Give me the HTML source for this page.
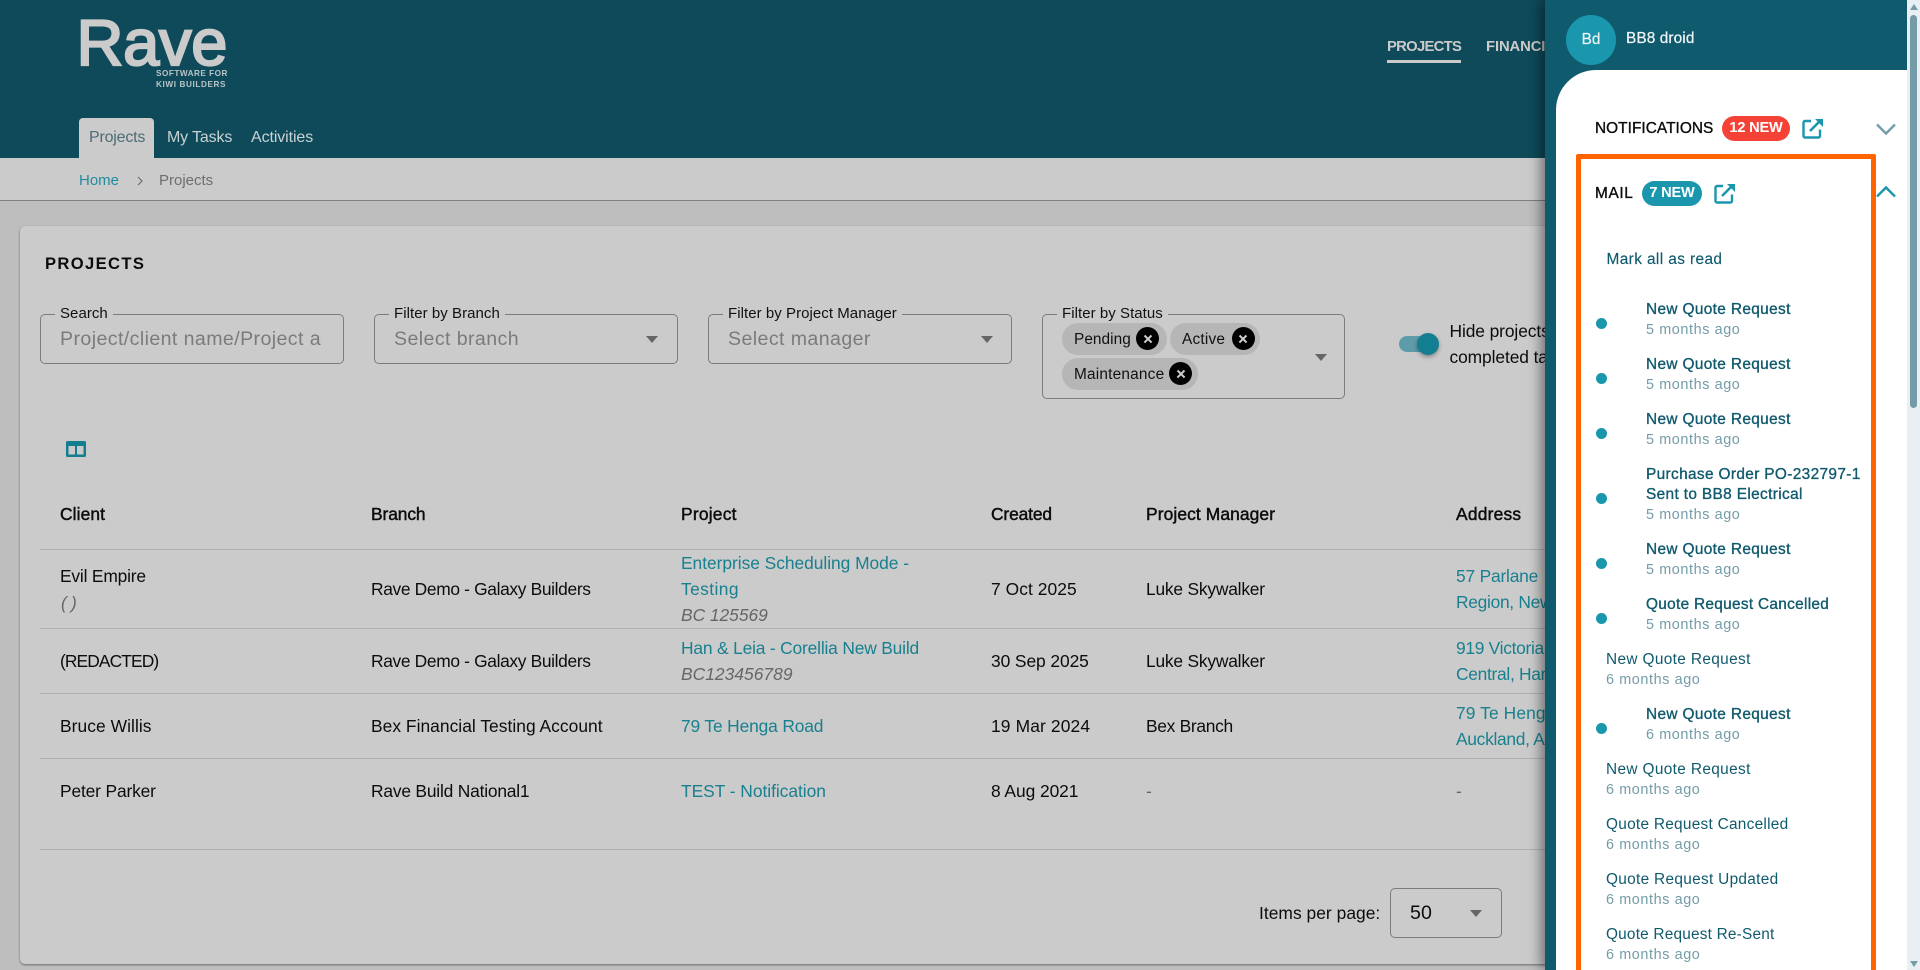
<!DOCTYPE html>
<html lang="en"><head><meta charset="utf-8"><title>Rave Projects</title>
<style>
html,body{margin:0;padding:0;width:1920px;height:970px;overflow:hidden;background:#bebebe}
body{font-family:"Liberation Sans",sans-serif;color:#0c0c0c;position:relative}
div,span,a{position:absolute;display:block}
.t{white-space:nowrap;line-height:20px}
.b{font-size:17.4px;letter-spacing:-.3px;margin-top:.5px}
.h{font-size:17.4px;letter-spacing:-.3px;-webkit-text-stroke:.45px currentColor;margin-top:.5px}
.l{font-size:17.4px;letter-spacing:-.3px;color:#19808f;margin-top:.5px}
.i{font-size:17.4px;letter-spacing:-.3px;color:#666;font-style:italic;margin-top:.5px}
.hr{left:40px;width:1505px;height:1px;background:#b0b0b0}
.f{border:1.4px solid #7c7c7c;border-radius:5px;box-sizing:border-box}
.lb{font-size:15px;letter-spacing:.05px;background:#cbcbcb;padding:0 5px;color:#111;margin-top:1px;line-height:18px}
.ph{font-size:19.6px;color:#7b7b7b;letter-spacing:.4px}
.ar{width:0;height:0;border-left:6.5px solid transparent;border-right:6.5px solid transparent;border-top:7px solid #666}
.chip{background:#b6b6b6;border-radius:16px;height:32px}
.x{width:23px;height:23px;border-radius:50%;background:#000}
.x:before,.x:after{content:"";position:absolute;left:6.5px;top:10.5px;width:10px;height:2.2px;background:#ccc;transform:rotate(45deg)}
.x:after{transform:rotate(-45deg)}
.ct{font-size:15.4px;letter-spacing:.2px;color:#111;margin-top:1px}
.n{font-size:15.4px;letter-spacing:.36px;color:#105a6d;margin-top:2px}
.n.m{-webkit-text-stroke:.35px #105a6d}
.s{font-size:14.4px;letter-spacing:.6px;color:#749ca8;margin-top:1px}
.d{left:1595.5px;width:11px;height:11px;border-radius:50%;background:#1a97ad}
</style></head><body>

<!-- header -->
<div style="left:0;top:0;width:1920px;height:158px;background:#0e4a59"></div>
<div class="t" style="left:76.500px;top:6px;font-size:65px;line-height:74px;letter-spacing:-.3px;color:#cbcbcb;-webkit-text-stroke:2.2px #cbcbcb">Rave</div>
<div class="t" style="left:156px;top:69px;font-size:8.2px;line-height:10px;font-weight:bold;letter-spacing:.5px;color:#b9c4c7">SOFTWARE FOR</div>
<div class="t" style="left:156px;top:79.5px;font-size:8.2px;line-height:10px;font-weight:bold;letter-spacing:.6px;color:#b9c4c7">KIWI BUILDERS</div>
<div style="left:79px;top:118px;width:75px;height:40px;background:#cbcbcb;border-radius:4px 4px 0 0"></div>
<div class="t" style="left:89px;top:128px;font-size:16px;letter-spacing:-.2px;color:#4c6c75">Projects</div>
<div class="t" style="left:167px;top:128px;font-size:16px;letter-spacing:-.15px;color:#c9d2d4">My Tasks</div>
<div class="t" style="left:251px;top:128px;font-size:16px;letter-spacing:-.1px;color:#c9d2d4">Activities</div>
<div class="t" style="left:1387px;top:37px;font-size:14.8px;font-weight:bold;letter-spacing:-.7px;color:#cbcbcb">PROJECTS</div>
<div style="left:1387px;top:60px;width:74px;height:3px;background:#cbcbcb"></div>
<div class="t" style="left:1486px;top:37px;font-size:14.8px;font-weight:bold;letter-spacing:-.1px;color:#cbcbcb">FINANCIALS</div>

<!-- breadcrumb -->
<div style="left:0;top:158px;width:1920px;height:42px;background:#cbcbcb;border-bottom:1px solid #7f7f7f"></div>
<div class="t" style="left:79px;top:171px;font-size:15px;letter-spacing:0;color:#208ca0">Home</div>
<svg style="position:absolute;left:136px;top:175px" width="8" height="12"><path d="M2 2l4 4-4 4" fill="none" stroke="#6e6e6e" stroke-width="1.2"/></svg>
<div class="t" style="left:159px;top:171px;font-size:15px;letter-spacing:0;color:#6e6e6e">Projects</div>

<!-- card -->
<div style="left:20px;top:226px;width:1600px;height:738px;background:#cbcbcb;border-radius:5px;box-shadow:0 1px 2px rgba(0,0,0,.45)"></div>
<div class="t" style="left:45px;top:254px;font-size:16.6px;font-weight:bold;letter-spacing:1.35px;color:#0c0c0c">PROJECTS</div>

<!-- filters -->
<div class="f" style="left:40px;top:314px;width:304px;height:50px"></div>
<div class="t lb" style="left:55px;top:304px">Search</div>
<div style="left:60px;top:325px;width:262px;height:30px;overflow:hidden"><span class="t ph" style="left:0;top:4px">Project/client name/Project address</span></div>
<div class="f" style="left:374px;top:314px;width:304px;height:50px"></div>
<div class="t lb" style="left:389px;top:304px">Filter by Branch</div>
<div class="t ph" style="left:394px;top:329px">Select branch</div>
<div class="ar" style="left:646px;top:336px"></div>
<div class="f" style="left:708px;top:314px;width:304px;height:50px"></div>
<div class="t lb" style="left:723px;top:304px">Filter by Project Manager</div>
<div class="t ph" style="left:728px;top:329px">Select manager</div>
<div class="ar" style="left:980.5px;top:336px"></div>
<div class="f" style="left:1042px;top:314px;width:303px;height:85px"></div>
<div class="t lb" style="left:1057px;top:304px">Filter by Status</div>
<div class="chip" style="left:1062px;top:323px;width:105px"></div>
<div class="t ct" style="left:1074px;top:329px;letter-spacing:.05px">Pending</div>
<div class="x" style="left:1136px;top:327px"></div>
<div class="chip" style="left:1170px;top:323px;width:90px"></div>
<div class="t ct" style="left:1182px;top:329px">Active</div>
<div class="x" style="left:1231.5px;top:327px"></div>
<div class="chip" style="left:1062px;top:358px;width:136px"></div>
<div class="t ct" style="left:1074px;top:364px">Maintenance</div>
<div class="x" style="left:1169px;top:362px"></div>
<div class="ar" style="left:1314.5px;top:354px"></div>
<div style="left:1399px;top:336px;width:36px;height:16px;border-radius:8px;background:#5f9ca9"></div>
<div style="left:1416.5px;top:333px;width:22px;height:22px;border-radius:50%;background:#137e90;box-shadow:0 2px 4px rgba(0,0,0,.35)"></div>
<div class="t b" style="left:1449.5px;top:321px;margin-top:0;letter-spacing:-.1px">Hide projects with</div>
<div class="t b" style="left:1449.5px;top:347px;margin-top:0;letter-spacing:-.1px">completed tasks</div>

<!-- column icon -->
<svg style="position:absolute;left:66px;top:441px" width="20" height="16" viewBox="0 0 20 16"><path d="M1.500 0h17A1.500 1.500 0 0 1 20 1.500v13a1.500 1.500 0 0 1-1.500 1.500h-17A1.500 1.500 0 0 1 0 14.500v-13A1.500 1.500 0 0 1 1.500 0zM2.500 5v8.500h6.500V5zM11 5v8.500h6.500V5z" fill="#137e90" fill-rule="evenodd"/></svg>

<!-- table -->
<div class="t h" style="left:60px;top:503px;letter-spacing:.1px">Client</div>
<div class="t h" style="left:371px;top:503px;letter-spacing:-.1px">Branch</div>
<div class="t h" style="left:681px;top:503px;letter-spacing:.22px">Project</div>
<div class="t h" style="left:991px;top:503px;letter-spacing:-.13px">Created</div>
<div class="t h" style="left:1146px;top:503px;letter-spacing:.1px">Project Manager</div>
<div class="t h" style="left:1456px;top:503px;letter-spacing:.22px">Address</div>
<div class="hr" style="top:549px"></div>

<div class="t b" style="left:60px;top:565px;letter-spacing:-.19px">Evil Empire</div>
<div class="t i" style="left:61px;top:592px">( )</div>
<div class="t b" style="left:371px;top:578px;letter-spacing:-.35px">Rave Demo - Galaxy Builders</div>
<div class="t l" style="left:681px;top:552px;letter-spacing:-.04px">Enterprise Scheduling Mode -</div>
<div class="t l" style="left:681px;top:578px;letter-spacing:.4px">Testing</div>
<div class="t i" style="left:681px;top:604px;letter-spacing:-.03px">BC 125569</div>
<div class="t b" style="left:991px;top:578px;letter-spacing:.07px">7 Oct 2025</div>
<div class="t b" style="left:1146px;top:578px;letter-spacing:-.21px">Luke Skywalker</div>
<div class="t l" style="left:1456px;top:565px;letter-spacing:-.2px">57 Parlane</div>
<div class="t l" style="left:1456px;top:591px">Region, New Zealand</div>
<div class="hr" style="top:628px"></div>

<div class="t b" style="left:60px;top:650px;letter-spacing:-.9px">(REDACTED)</div>
<div class="t b" style="left:371px;top:650px;letter-spacing:-.35px">Rave Demo - Galaxy Builders</div>
<div class="t l" style="left:681px;top:637px;letter-spacing:-.18px">Han &amp; Leia - Corellia New Build</div>
<div class="t i" style="left:681px;top:663px;letter-spacing:.03px">BC123456789</div>
<div class="t b" style="left:991px;top:650px;letter-spacing:-.08px">30 Sep 2025</div>
<div class="t b" style="left:1146px;top:650px;letter-spacing:-.21px">Luke Skywalker</div>
<div class="t l" style="left:1456px;top:637px">919 Victoria Street</div>
<div class="t l" style="left:1456px;top:663px">Central, Hamilton</div>
<div class="hr" style="top:693px"></div>

<div class="t b" style="left:60px;top:715px;letter-spacing:.06px">Bruce Willis</div>
<div class="t b" style="left:371px;top:715px;letter-spacing:.03px">Bex Financial Testing Account</div>
<div class="t l" style="left:681px;top:715px;letter-spacing:-.15px">79 Te Henga Road</div>
<div class="t b" style="left:991px;top:715px;letter-spacing:.14px">19 Mar 2024</div>
<div class="t b" style="left:1146px;top:715px">Bex Branch</div>
<div class="t l" style="left:1456px;top:702px;letter-spacing:.1px">79 Te Henga Road</div>
<div class="t l" style="left:1456px;top:728px">Auckland, Auckland</div>
<div class="hr" style="top:758px"></div>

<div class="t b" style="left:60px;top:780px;letter-spacing:-.15px">Peter Parker</div>
<div class="t b" style="left:371px;top:780px;letter-spacing:-.2px">Rave Build National1</div>
<div class="t l" style="left:681px;top:780px;letter-spacing:-.04px">TEST - Notification</div>
<div class="t b" style="left:991px;top:780px;letter-spacing:-.06px">8 Aug 2021</div>
<div class="t b" style="left:1146px;top:780px;color:#666">-</div>
<div class="t b" style="left:1456px;top:780px;color:#666">-</div>
<div class="hr" style="top:849px"></div>

<div class="t b" style="left:1259px;top:903px;margin-top:0;letter-spacing:.03px">Items per page:</div>
<div class="f" style="left:1390px;top:888px;width:112px;height:50px"></div>
<div class="t" style="left:1410px;top:903px;font-size:19.6px;letter-spacing:.1px">50</div>
<div class="ar" style="left:1470px;top:910px"></div>

<!-- panel -->
<div style="left:1545px;top:0;width:362px;height:970px;background:#105a6d;box-shadow:-4px 0 12px rgba(0,0,0,.45)"></div>
<div style="left:1556px;top:70px;width:351px;height:900px;background:#fff;border-top-left-radius:40px"></div>
<div style="left:1566px;top:15px;width:50px;height:50px;border-radius:50%;background:#1a97ad"></div>
<div class="t" style="left:1566px;top:30px;width:50px;text-align:center;font-size:15.4px;color:#eef6f8;-webkit-text-stroke:.2px #eef6f8">Bd</div>
<div class="t" style="left:1626px;top:29px;font-size:15.4px;letter-spacing:.1px;color:#eef3f5;-webkit-text-stroke:.25px #eef3f5">BB8 droid</div>
<div class="t" style="left:1595px;top:118.500px;font-size:15.4px;letter-spacing:.05px;color:#0c0c0c;-webkit-text-stroke:.35px #0c0c0c">NOTIFICATIONS</div>
<div style="left:1722px;top:116px;width:68px;height:25px;border-radius:13px;background:#f44336"></div>
<div class="t" style="left:1722px;top:118px;width:68px;text-align:center;font-size:14.6px;font-weight:bold;letter-spacing:-.2px;color:#fff">12 NEW</div>
<svg style="position:absolute;left:1802px;top:118px" width="21" height="21" viewBox="0 0 21 21"><path d="M9 3H3a1.500 1.500 0 0 0-1.500 1.500V18A1.500 1.500 0 0 0 3 19.500h13.500A1.500 1.500 0 0 0 18 18v-6.500" fill="none" stroke="#1a97ad" stroke-width="2.400"/><path d="M8 13L17.500 3.500" stroke="#1a97ad" stroke-width="2.600"/><path d="M13 1h8v8z" fill="#1a97ad"/></svg>
<svg style="position:absolute;left:1876px;top:123px" width="20" height="13" viewBox="0 0 20 13"><path d="M1 1.500l9 9 9-9" fill="none" stroke="#749ca8" stroke-width="2.400"/></svg>

<div style="left:1575.500px;top:154px;width:290px;height:830px;border:5px solid #ff6400;border-radius:2px"></div>
<div class="t" style="left:1595px;top:183.500px;font-size:15.4px;letter-spacing:.65px;color:#0c0c0c;-webkit-text-stroke:.35px #0c0c0c">MAIL</div>
<div style="left:1642px;top:181px;width:60px;height:25px;border-radius:13px;background:#1a97ad"></div>
<div class="t" style="left:1642px;top:183px;width:60px;text-align:center;font-size:14.6px;font-weight:bold;letter-spacing:-.2px;color:#fff">7 NEW</div>
<svg style="position:absolute;left:1714px;top:183px" width="21" height="21" viewBox="0 0 21 21"><path d="M9 3H3a1.500 1.500 0 0 0-1.500 1.500V18A1.500 1.500 0 0 0 3 19.500h13.500A1.500 1.500 0 0 0 18 18v-6.500" fill="none" stroke="#1a97ad" stroke-width="2.400"/><path d="M8 13L17.500 3.500" stroke="#1a97ad" stroke-width="2.600"/><path d="M13 1h8v8z" fill="#1a97ad"/></svg>
<svg style="position:absolute;left:1876px;top:185px" width="20" height="13" viewBox="0 0 20 13"><path d="M1 11.500l9-9 9 9" fill="none" stroke="#1a97ad" stroke-width="2.400"/></svg>
<div class="t n" style="left:1606.500px;top:248px;letter-spacing:.4px;-webkit-text-stroke:.15px #105a6d">Mark all as read</div>

<div class="d" style="top:318px"></div><div class="t n m" style="left:1646px;top:298px">New Quote Request</div><div class="t s" style="left:1646px;top:319px">5 months ago</div>
<div class="d" style="top:373px"></div><div class="t n m" style="left:1646px;top:353px">New Quote Request</div><div class="t s" style="left:1646px;top:374px">5 months ago</div>
<div class="d" style="top:428px"></div><div class="t n m" style="left:1646px;top:408px">New Quote Request</div><div class="t s" style="left:1646px;top:429px">5 months ago</div>
<div class="d" style="top:493px"></div><div class="t n m" style="left:1646px;top:463px">Purchase Order PO-232797-1</div><div class="t n m" style="left:1646px;top:483px">Sent to BB8 Electrical</div><div class="t s" style="left:1646px;top:504px">5 months ago</div>
<div class="d" style="top:558px"></div><div class="t n m" style="left:1646px;top:538px">New Quote Request</div><div class="t s" style="left:1646px;top:559px">5 months ago</div>
<div class="d" style="top:613px"></div><div class="t n m" style="left:1646px;top:593px;letter-spacing:.3px">Quote Request Cancelled</div><div class="t s" style="left:1646px;top:614px">5 months ago</div>
<div class="t n" style="left:1606px;top:648px">New Quote Request</div><div class="t s" style="left:1606px;top:669px">6 months ago</div>
<div class="d" style="top:723px"></div><div class="t n m" style="left:1646px;top:703px">New Quote Request</div><div class="t s" style="left:1646px;top:724px">6 months ago</div>
<div class="t n" style="left:1606px;top:758px">New Quote Request</div><div class="t s" style="left:1606px;top:779px">6 months ago</div>
<div class="t n" style="left:1606px;top:813px;letter-spacing:.27px">Quote Request Cancelled</div><div class="t s" style="left:1606px;top:834px">6 months ago</div>
<div class="t n" style="left:1606px;top:868px;letter-spacing:.31px">Quote Request Updated</div><div class="t s" style="left:1606px;top:889px">6 months ago</div>
<div class="t n" style="left:1606px;top:923px;letter-spacing:.2px">Quote Request Re-Sent</div><div class="t s" style="left:1606px;top:944px">6 months ago</div>

<!-- scrollbar -->
<div style="left:1907px;top:0;width:13px;height:970px;background:#e9eff2"></div>
<div style="left:1910px;top:15px;width:7px;height:393px;border-radius:4px;background:#749ca8"></div>
<div style="left:1909.500px;top:4px;width:0;height:0;border-left:4px solid transparent;border-right:4px solid transparent;border-bottom:6px solid #749ca8"></div>
<div style="left:1909.500px;top:961px;width:0;height:0;border-left:4px solid transparent;border-right:4px solid transparent;border-top:6px solid #749ca8"></div>
</body></html>
